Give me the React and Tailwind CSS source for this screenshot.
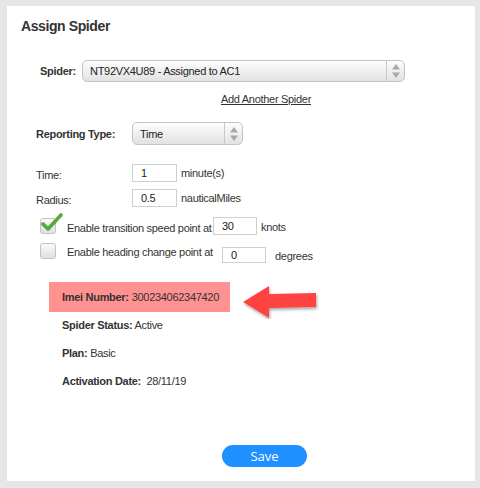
import React from 'react';

function Select({ value, width, divider }) {
  return (
    <div
      className={`flex h-full items-stretch rounded-[5px] border border-[#c4c4c4] bg-gradient-to-b from-[#fdfdfd] to-[#e2e2e2] ${width}`}
    >
      <div className="flex flex-1 items-center pl-[7px] text-[#222]">{value}</div>
      <div className={`flex items-center justify-center border-l border-[#c8c8c8] ${divider}`}>
        <svg width="8" height="14" viewBox="0 0 8 14">
          <polygon points="4,0 8,5.5 0,5.5" fill="#a9a9a9" />
          <polygon points="4,14 8,8.5 0,8.5" fill="#a9a9a9" />
        </svg>
      </div>
    </div>
  );
}

function Check({ checked }) {
  return (
    <div className="relative h-[16px] w-[16px] shrink-0 rounded-[3px] border border-[#c2c2c2] bg-gradient-to-b from-[#fafafa] to-[#e0e0e0]">
      {checked && (
        <svg className="absolute left-[0px] top-[-6px]" width="22" height="20" viewBox="0 0 22 20">
          <path d="M2 11 L7 16 L20 2" fill="none" stroke="#5aa83a" strokeWidth="3.6" strokeLinecap="round" strokeLinejoin="round" />
        </svg>
      )}
    </div>
  );
}

function Field({ value, w }) {
  return (
    <div className={`flex h-full items-center border border-[#cfcfcf] bg-white pl-[8px] text-[#222] ${w}`}>
      {value}
    </div>
  );
}

export default function App() {
  return (
    <div
      className="h-[488px] w-[480px] bg-[#e6e6e6] pl-[7px] pt-[6px]"
      style={{ fontFamily: '"Liberation Sans", Arial, sans-serif' }}
    >
      <div className="relative h-[475px] w-[468px] whitespace-nowrap bg-white pl-[14px] pt-[11px] text-[11px] leading-[14px] tracking-[-0.3px] text-[#333]">
        <h1 className="h-[18px] text-[14px] font-bold leading-[18px] tracking-[-0.4px] text-[#333]">Assign Spider</h1>

        <div className="ml-[19px] mt-[25px] flex h-[22px] items-center">
          <span className="w-[42px] font-bold">Spider:</span>
          <Select value="NT92VX4U89 - Assigned to AC1" width="w-[323px]" divider="w-[18px]" />
        </div>

        <div className="ml-[200px] mt-[10px] h-[14px]">
          <a className="text-[#333] underline">Add Another Spider</a>
        </div>

        <div className="ml-[15px] mt-[16px] flex h-[23px] items-center">
          <span className="w-[96px] font-bold">Reporting Type:</span>
          <Select value="Time" width="w-[111px]" divider="w-[18px]" />
        </div>

        <div className="ml-[15px] mt-[19px] flex h-[18px] items-center">
          <span className="w-[96px] pt-[4px]">Time:</span>
          <Field value="1" w="w-[45px]" />
          <span className="ml-[4px]">minute(s)</span>
        </div>

        <div className="ml-[15px] mt-[7px] flex h-[18px] items-center">
          <span className="w-[96px] pt-[4px]">Radius:</span>
          <Field value="0.5" w="w-[45px]" />
          <span className="ml-[4px]">nauticalMiles</span>
        </div>

        <div className="ml-[19px] mt-[10px] flex h-[18px] items-center">
          <Check checked />
          <span className="ml-[11px] min-w-[146px] pt-[3px]">Enable transition speed point at</span>
          <Field value="30" w="w-[44px]" />
          <span className="ml-[4px] pt-[2px]">knots</span>
        </div>

        <div className="ml-[19px] mt-[8px] flex h-[20px] items-start">
          <Check />
          <span className="ml-[11px] mt-[2px] min-w-[155px]">Enable heading change point at</span>
          <div className="mt-[4px] h-[16px]">
            <Field value="0" w="w-[44px]" />
          </div>
          <span className="ml-[9px] mt-[6px]">degrees</span>
        </div>

        <div className="ml-[28px] mt-[19px] flex h-[30px] w-[181px] items-center bg-[#ff9191] pl-[13px]">
          <span className="font-bold">Imei Number:</span>
          <span className="ml-[3px]">300234062347420</span>
        </div>

        <div className="ml-[41px] mt-[6px]">
          <span className="font-bold">Spider Status:</span> Active
        </div>
        <div className="ml-[41px] mt-[14px]">
          <span className="font-bold">Plan:</span> Basic
        </div>
        <div className="ml-[41px] mt-[14px]">
          <span className="font-bold">Activation Date:</span>&nbsp; 28/11/19
        </div>

        <div className="ml-[201px] mt-[57px]">
          <button
            className="h-[22px] w-[85px] rounded-full bg-[#1e90ff] text-[13px] leading-[22px] tracking-normal text-white"
            style={{ fontFamily: '"Open Sans", sans-serif' }}
          >
            Save
          </button>
        </div>

        <svg className="absolute left-[229px] top-[273px]" width="84" height="40" viewBox="0 0 84 40">
          <defs>
            <filter id="sh" x="-20%" y="-30%" width="140%" height="160%">
              <feDropShadow dx="1" dy="2" stdDeviation="1.5" floodColor="#000" floodOpacity="0.35" />
            </filter>
          </defs>
          <polygon
            points="7,23 33,7 33,15 80,14 80,28 33,29 33,39"
            fill="#ff4343"
            filter="url(#sh)"
          />
        </svg>
      </div>
    </div>
  );
}
